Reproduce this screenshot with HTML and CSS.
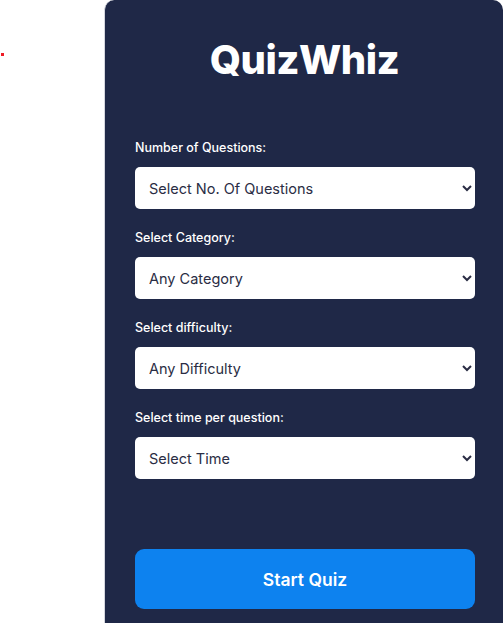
FILE: index.html
```html
<!DOCTYPE html>
<html>
<head>
<meta charset="utf-8">
<link rel="stylesheet" href="styles.css">
</head>
<body>
<div class="side"><span class="dot"></span></div>
<main class="card">
  <h1 class="title">QuizWhiz</h1>
  <form class="form">
    <div class="field">
      <label class="label">Number of Questions:</label>
      <select class="select"><option>Select No. Of Questions</option></select>
    </div>
    <div class="field">
      <label class="label">Select Category:</label>
      <select class="select"><option>Any Category</option></select>
    </div>
    <div class="field">
      <label class="label">Select difficulty:</label>
      <select class="select"><option>Any Difficulty</option></select>
    </div>
    <div class="field">
      <label class="label">Select time per question:</label>
      <select class="select"><option>Select Time</option></select>
    </div>
    <button type="button" class="start">Start Quiz</button>
  </form>
</main>
</body>
</html>
```
FILE: styles.css
```css
html, body { margin: 0; padding: 0; background: #fff; height: 100%; overflow: hidden; }
body { display: flex; font-family: "Inter", "Open Sans", sans-serif; }
.side { width: 104px; flex: none; }
.dot { display: block; width: 3px; height: 3px; background: #ee1c25; margin: 53px 0 0 1px; }
.card {
  width: 399px; flex: none; box-sizing: border-box;
  background: #1f2847; border-left: 1px solid #d4d6de;
  border-radius: 10px 10px 0 0; padding: 35px 29px 0 30px;
  min-height: 640px;
}
.title { margin: 0; text-align: center; color: #fff; font-size: 40px; font-weight: 800; line-height: 50px; font-family: "Inter", sans-serif; letter-spacing: -0.5px; }
.form { display: flex; flex-direction: column; margin-top: 54px; }
.field { display: flex; flex-direction: column; gap: 10px; margin-bottom: 20px; }
.label { color: #fff; font-size: 12.5px; font-weight: 500; line-height: 18px; }
.select {
  height: 42px; width: 340px; border: none; border-radius: 5px; background: #fff;
  font-family: "Inter", sans-serif; font-size: 14.5px; color: #2a2d44; padding: 0 10px;
}
.start {
  margin-top: 50px; width: 340px; height: 60px; border: none; border-radius: 9px;
  background: #0d82ef; color: #fff; font-family: "Inter", sans-serif; font-size: 17.5px; font-weight: 600;
}
```
